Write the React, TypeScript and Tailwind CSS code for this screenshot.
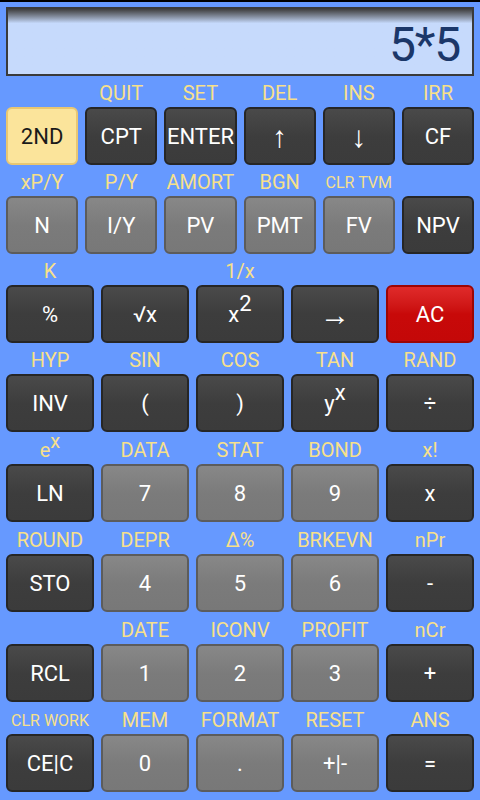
import React from "react";

type K = { label?: React.ReactNode; text: React.ReactNode; kind: "dark" | "gray" | "yellow" | "red"; small?: boolean; big?: boolean };

const kindCls: Record<string, string> = {
  dark: "bg-[#3d3d3d] border-[#262626] text-white bg-gradient-to-b from-[#4a4a4a] via-[#3d3d3d] to-[#3b3b3b]",
  gray: "bg-[#7b7b7b] border-[#5c5c5c] text-white bg-gradient-to-b from-[#888888] via-[#7b7b7b] to-[#787878]",
  yellow: "bg-[#fbe49b] border-[#e9c772] text-[#1a1a1a]",
  red: "bg-[#c80909] border-[#9c0505] text-white bg-gradient-to-b from-[#e02a2a] via-[#c80909] to-[#c40808]",
};

const supBtn = (b: string, s: string) => (
  <span className="inline-block">
    {b}
    <span className="relative -top-[11px] text-[22px]">{s}</span>
  </span>
);

const rows: { lh: number; keys: K[] }[] = [
  {
    lh: 31,
    keys: [
      { text: "2ND", kind: "yellow" },
      { label: "QUIT", text: "CPT", kind: "dark" },
      { label: "SET", text: "ENTER", kind: "dark" },
      { label: "DEL", text: "↑", kind: "dark", big: true },
      { label: "INS", text: "↓", kind: "dark", big: true },
      { label: "IRR", text: "CF", kind: "dark" },
    ],
  },
  {
    lh: 31,
    keys: [
      { label: "xP/Y", text: "N", kind: "gray" },
      { label: "P/Y", text: "I/Y", kind: "gray" },
      { label: "AMORT", text: "PV", kind: "gray" },
      { label: "BGN", text: "PMT", kind: "gray" },
      { label: "CLR TVM", small: true, text: "FV", kind: "gray" },
      { text: "NPV", kind: "dark" },
    ],
  },
  {
    lh: 31,
    keys: [
      { label: "K", text: "%", kind: "dark" },
      { text: "√x", kind: "dark" },
      { label: "1/x", text: supBtn("x", "2"), kind: "dark" },
      { text: "→", kind: "dark", big: true },
      { text: "AC", kind: "red" },
    ],
  },
  {
    lh: 31,
    keys: [
      { label: "HYP", text: "INV", kind: "dark" },
      { label: "SIN", text: "(", kind: "dark" },
      { label: "COS", text: ")", kind: "dark" },
      { label: "TAN", text: supBtn("y", "x"), kind: "dark" },
      { label: "RAND", text: "÷", kind: "dark" },
    ],
  },
  {
    lh: 32,
    keys: [
      {
        label: (
          <span className="inline-block">
            e<span className="relative -top-[9px]">x</span>
          </span>
        ),
        text: "LN",
        kind: "dark",
      },
      { label: "DATA", text: "7", kind: "gray" },
      { label: "STAT", text: "8", kind: "gray" },
      { label: "BOND", text: "9", kind: "gray" },
      { label: "x!", text: "x", kind: "dark" },
    ],
  },
  {
    lh: 32,
    keys: [
      { label: "ROUND", text: "STO", kind: "dark" },
      { label: "DEPR", text: "4", kind: "gray" },
      { label: "Δ%", text: "5", kind: "gray" },
      { label: "BRKEVN", text: "6", kind: "gray" },
      { label: "nPr", text: "-", kind: "dark" },
    ],
  },
  {
    lh: 32,
    keys: [
      { text: "RCL", kind: "dark" },
      { label: "DATE", text: "1", kind: "gray" },
      { label: "ICONV", text: "2", kind: "gray" },
      { label: "PROFIT", text: "3", kind: "gray" },
      { label: "nCr", text: "+", kind: "dark" },
    ],
  },
  {
    lh: 32,
    keys: [
      { label: "CLR WORK", small: true, text: "CE|C", kind: "dark" },
      { label: "MEM", text: "0", kind: "gray" },
      { label: "FORMAT", text: ".", kind: "gray" },
      { label: "RESET", text: "+|-", kind: "gray" },
      { label: "ANS", text: "=", kind: "dark" },
    ],
  },
];

export default function App() {
  return (
    <div
      className="w-[480px] h-[800px] bg-[#6699ff] overflow-hidden flex flex-col"
      style={{ fontFamily: "Roboto, 'Noto Sans', sans-serif" }}
    >
      <div className="h-[2px] bg-black" />
      <div className="px-[6px] pt-[5px]">
        <div className="h-[69px] border-2 border-[#3a3a3a] bg-gradient-to-b from-[#3e3e3e] from-0% via-[#c6dafc] via-[22%] to-[#c6dafc] flex items-center justify-end pr-[12px] pt-[6px]">
          <span className="text-[48px] leading-none text-[#1b3769] tracking-tight">5*5</span>
        </div>
      </div>
      <div className="px-[6px]">
        {rows.map((r, i) => (
          <div key={i}>
            <div className={`flex gap-[7px]`} style={{ height: r.lh }}>
              {r.keys.map((k, j) => (
                <div
                  key={j}
                  className={`flex-1 flex items-end justify-center text-[#f7e08a] leading-none ${k.small ? "text-[16px] pb-[5px]" : "text-[20px] pb-[4px]"}`}
                >
                  {k.label}
                </div>
              ))}
            </div>
            <div className="flex gap-[7px] h-[58px]">
              {r.keys.map((k, j) => (
                <div
                  key={j}
                  className={`flex-1 rounded-[6px] border-2 flex items-center justify-center leading-none pt-[2px] ${k.big ? "text-[30px]" : "text-[22px]"} ${kindCls[k.kind]}`}
                >
                  {k.text}
                </div>
              ))}
            </div>
          </div>
        ))}
      </div>
    </div>
  );
}
